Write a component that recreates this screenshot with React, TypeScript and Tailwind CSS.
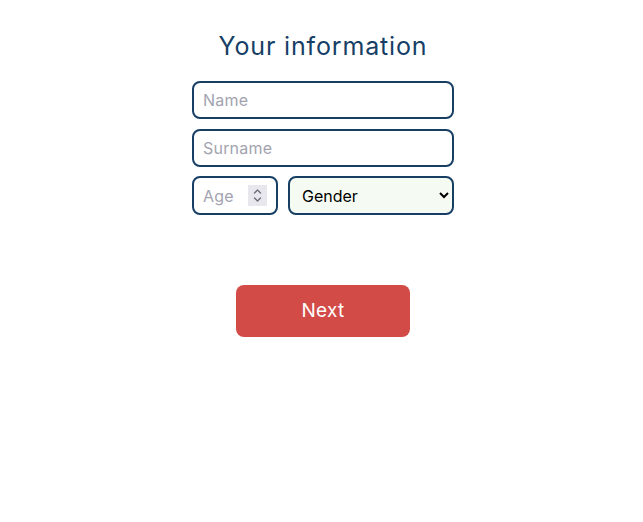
export default function App() {
  return (
    <div className="min-h-screen bg-white flex flex-col items-center pt-[28px] pl-[3px] font-['Inter',sans-serif]">
      <h1 className="text-[25px] leading-[36px] text-[#173f66] tracking-[0.85px]">Your information</h1>
      <form className="mt-[17px] w-[262px] flex flex-col gap-[10px]" onSubmit={(e) => e.preventDefault()}>
        <input
          type="text"
          placeholder="Name"
          className="h-[38px] w-full rounded-[8px] border-2 border-[#173f63] px-[9px] text-[16px] tracking-[0.2px] text-black placeholder:text-[#a3a3b0] outline-none"
        />
        <input
          type="text"
          placeholder="Surname"
          className="h-[38px] w-full rounded-[8px] border-2 border-[#173f63] px-[9px] text-[16px] tracking-[0.2px] text-black placeholder:text-[#a3a3b0] outline-none"
        />
        <div className="-mt-px flex gap-[10px]">
          <div className="relative w-[86px]">
            <input
              type="number"
              placeholder="Age"
              className="h-[39px] w-full rounded-[8px] border-2 border-[#173f63] pl-[9px] pr-[30px] text-[16px] tracking-[0.2px] text-black placeholder:text-[#a3a3b0] outline-none [appearance:textfield] [&::-webkit-inner-spin-button]:appearance-none [&::-webkit-outer-spin-button]:appearance-none"
            />
            {/* spinner */}
            <div className="pointer-events-none absolute left-[56px] top-[9px] flex h-[21px] w-[19px] flex-col items-center justify-center bg-[#e9e7ee]">
              <svg width="9" height="15" viewBox="0 0 9 15" fill="none" stroke="#6b6b78" strokeWidth="1.3" strokeLinecap="round" strokeLinejoin="round">
                <path d="M1.5 5 L4.5 2 L7.5 5" />
                <path d="M1.5 10 L4.5 13 L7.5 10" />
              </svg>
            </div>
          </div>
          <select
            defaultValue=""
            className="h-[39px] flex-1 rounded-[8px] border-2 border-[#173f63] bg-[#f5fbf3] pl-[8px] pr-[4px] text-[16px] text-black outline-none"
          >
            <option value="" disabled>
              Gender
            </option>
            <option value="m">Male</option>
            <option value="f">Female</option>
            <option value="o">Other</option>
          </select>
        </div>
        <div className="flex justify-center mt-[60px]">
          <button
            type="submit"
            className="h-[52px] w-[174px] rounded-[8px] bg-[#d24b47] text-white text-[19px] tracking-[0.3px]"
          >
            Next
          </button>
        </div>
      </form>
    </div>
  );
}
